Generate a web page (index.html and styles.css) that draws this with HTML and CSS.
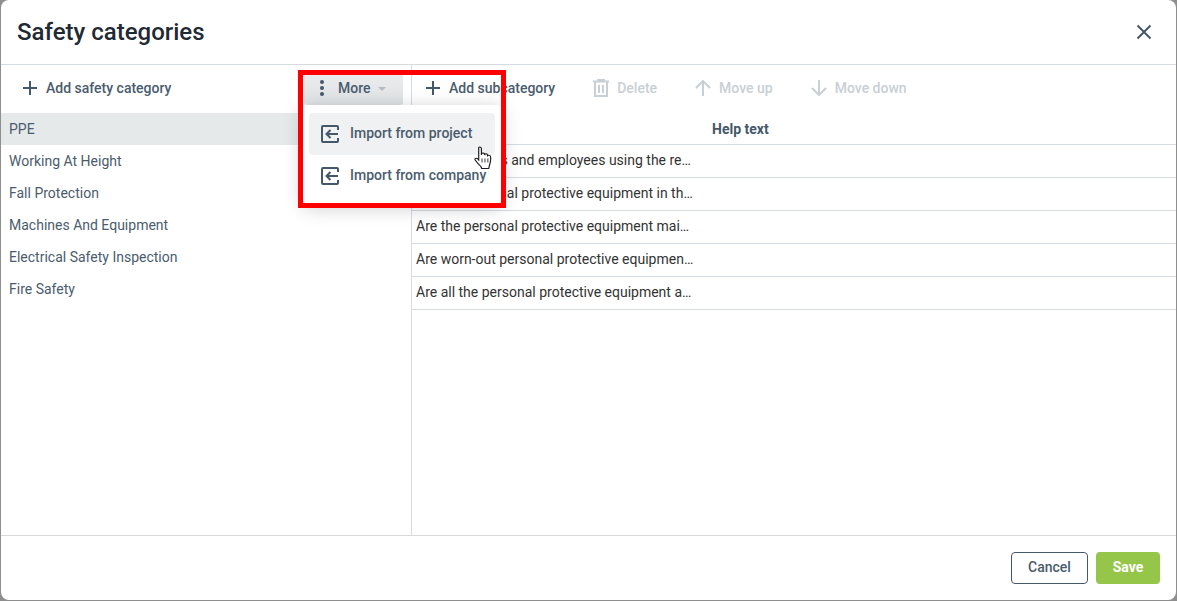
FILE: index.html
```html
<!DOCTYPE html>
<html lang="en">
<head>
<meta charset="utf-8">
<title>Safety categories</title>
<link rel="stylesheet" href="styles.css">
</head>
<body>
<div class="dialog">
  <header class="head">
    <h1 class="title">Safety categories</h1>
    <button class="close" aria-label="Close">
      <svg width="16" height="16" viewBox="0 0 16 16"><path d="M1.500 1.500l13 13M14.500 1.500l-13 13" fill="none" stroke="#44586a" stroke-width="2"/></svg>
    </button>
  </header>
  <main class="body">
    <section class="left">
      <div class="toolbar left-bar">
        <button class="tool">
          <svg class="ico" width="16" height="16" viewBox="0 0 16 16"><path d="M8 1v14M1 8h14" fill="none" stroke="#44586a" stroke-width="2"/></svg>
          Add safety category
        </button>
        <button class="more">
          <svg width="4" height="16" viewBox="0 0 4 16"><circle cx="2" cy="2" r="2" fill="#44586a"/><circle cx="2" cy="8" r="2" fill="#44586a"/><circle cx="2" cy="14" r="2" fill="#44586a"/></svg>
          <span class="more-label">More</span>
          <span class="caret"></span>
        </button>
      </div>
      <ul class="cats">
        <li class="cat selected">PPE</li>
        <li class="cat">Working At Height</li>
        <li class="cat">Fall Protection</li>
        <li class="cat">Machines And Equipment</li>
        <li class="cat">Electrical Safety Inspection</li>
        <li class="cat">Fire Safety</li>
      </ul>
    </section>
    <section class="right">
      <div class="toolbar right-bar">
        <button class="tool">
          <svg class="ico" width="16" height="16" viewBox="0 0 16 16"><path d="M8 1v14M1 8h14" fill="none" stroke="#44586a" stroke-width="2"/></svg>
          Add subcategory
        </button>
        <button class="tool off t-delete">
          <svg class="ico" width="16" height="18" viewBox="0 0 16 18"><path d="M0 2.500h16M5 2.500V1h6v1.500M2 2.500V17h12V2.500M6 6v8M10 6v8" fill="none" stroke="#c8cfd5" stroke-width="2"/></svg>
          Delete
        </button>
        <button class="tool off t-up">
          <svg class="ico" width="16" height="16" viewBox="0 0 16 16"><path d="M8 16V1.500M1 8l7-7 7 7" fill="none" stroke="#c8cfd5" stroke-width="2"/></svg>
          Move up
        </button>
        <button class="tool off t-down">
          <svg class="ico" width="16" height="16" viewBox="0 0 16 16"><path d="M8 0v14.500M1 8l7 7 7-7" fill="none" stroke="#c8cfd5" stroke-width="2"/></svg>
          Move down
        </button>
      </div>
      <div class="table">
        <div class="row row-head"><div class="cell"></div><div class="cell th">Help text</div></div>
        <div class="row"><div class="cell">Are instructors and employees using the required personal protective equipment?</div><div class="cell"></div></div>
        <div class="row"><div class="cell">Are the personal protective equipment in the work area suitable?</div><div class="cell"></div></div>
        <div class="row"><div class="cell">Are the personal protective equipment maintained in good condition?</div><div class="cell"></div></div>
        <div class="row"><div class="cell">Are worn-out personal protective equipment replaced on time?</div><div class="cell"></div></div>
        <div class="row"><div class="cell">Are all the personal protective equipment available on site?</div><div class="cell"></div></div>
      </div>
    </section>
  </main>
  <footer class="foot">
    <button class="btn cancel">Cancel</button>
    <button class="btn save">Save</button>
  </footer>
</div>

<div class="menu">
  <div class="menu-item hover">
    <svg width="18" height="18" viewBox="0 0 18 18"><path d="M17 5V2a1 1 0 0 0-1-1H2a1 1 0 0 0-1 1v14a1 1 0 0 0 1 1h14a1 1 0 0 0 1-1v-3M17 9H5.500M9.500 5l-4 4 4 4" fill="none" stroke="#44586a" stroke-width="2"/></svg>
    <span class="menu-label">Import from project</span>
  </div>
  <div class="menu-item">
    <svg width="18" height="18" viewBox="0 0 18 18"><path d="M17 5V2a1 1 0 0 0-1-1H2a1 1 0 0 0-1 1v14a1 1 0 0 0 1 1h14a1 1 0 0 0 1-1v-3M17 9H5.500M9.500 5l-4 4 4 4" fill="none" stroke="#44586a" stroke-width="2"/></svg>
    <span class="menu-label">Import from company</span>
  </div>
</div>
<div class="highlight"></div>
<svg class="cursor" width="20" height="25" viewBox="0 0 17 25" preserveAspectRatio="none"><path d="M4 1.500c1-.8 2.200-.3 2.300 1V9l.2-1.200c.5-1 2-1 2.400.2l.1 1 .2-.6c.6-.9 2-.7 2.300.4v1l.3-.3c.8-.6 2-.1 2.200 1 .4 2.500.2 5.500-.8 8.500l-.7 3.500H6.500l-.6-2C4 18.500 2.500 16.500 1 14c-.6-1.200.6-2.400 1.800-1.500L4 14V2.500z" fill="#fff" stroke="#1d1d1d" stroke-width="1"/><path d="M6.800 12.500v4M9.300 12.500v4M11.800 12.500v4" fill="none" stroke="#1d1d1d" stroke-width=".8"/></svg>
</body>
</html>
```

FILE: styles.css
```css
* { box-sizing: border-box; }
html, body { margin: 0; height: 100%; }
body {
  background: #8e8e8e;
  font-family: Roboto, "Liberation Sans", sans-serif;
  font-size: 14px;
  color: #4a5c6d;
  padding: 0 1px 1px;
  overflow: hidden;
}
button { font: inherit; color: inherit; background: none; border: 0; padding: 0; }

.dialog {
  height: 600px;
  background: #fff;
  border-radius: 8px;
  display: flex;
  flex-direction: column;
}
.head {
  height: 65px;
  flex: none;
  display: flex;
  align-items: center;
  justify-content: space-between;
  padding: 0 24px 0 16px;
  border-bottom: 1px solid #d5dbe0;
}
.title { margin: 0; font-size: 24px; font-weight: 500; color: #1f2a35; }
.close { display: flex; width: 16px; height: 16px; }

.body { flex: 1; display: flex; min-height: 0; }
.left { width: 411px; flex: none; border-right: 1px solid #d5dbe0; }
.right { flex: 1; min-width: 0; }

.toolbar { display: flex; align-items: center; height: 48px; padding-bottom: 2px; font-weight: 500; }
.left-bar { padding-left: 21px; justify-content: space-between; padding-right: 8px; }
.right-bar { padding-left: 13px; }
.tool { display: flex; align-items: center; gap: 8px; font-weight: 500; white-space: nowrap; }
.tool .ico { flex: none; }
.off { color: #c8cfd5; }
.t-delete { margin-left: 38px; }
.t-up { margin-left: 38px; }
.t-down { margin-left: 38px; }

.more {
  width: 99px;
  height: 30px;
  align-self: flex-end;
  margin-bottom: 6px;
  display: flex;
  align-items: center;
  padding: 0 0 4px 16px;
  font-weight: 500;
  background: linear-gradient(#e9ebed, #e0e3e5);
  border-radius: 0 0 3px 3px;
}
.more-label { margin-left: 14px; }
.caret {
  margin-left: 7px;
  margin-top: 2px;
  border: 4px solid transparent;
  border-top: 4px solid #b5bdc4;
  border-bottom: 0;
}

.cats { list-style: none; margin: 0; padding: 0; }
.cat { height: 32px; line-height: 32px; padding-left: 8px; }
.selected { background: #e6e9ea; }

.row {
  display: grid;
  grid-template-columns: 292px 1fr;
  height: 33px;
  border-bottom: 1px solid #d5dbe0;
  color: #333;
}
.row-head { height: 32px; color: #44586a; }
.cell {
  padding: 0 8px 0 4px;
  line-height: 30px;
  overflow: hidden;
  white-space: nowrap;
  text-overflow: ellipsis;
}
.th { font-weight: 700; padding-left: 8px; line-height: 33px; }

.foot {
  height: 65px;
  flex: none;
  border-top: 1px solid #d9d9d9;
  display: flex;
  align-items: center;
  justify-content: flex-end;
  gap: 8px;
  padding: 0 16px 0 0;
}
.btn { height: 32px; border-radius: 4px; font-weight: 500; padding-bottom: 2px; }
.cancel { width: 77px; border: 1px solid #44586a; background: #fff; }
.save { width: 64px; background: #95c64a; color: #fff; font-weight: 700; }

.menu {
  position: absolute;
  left: 303px;
  top: 105px;
  width: 198px;
  height: 98px;
  padding: 8px 6px;
  background: #fff;
  border-radius: 4px;
  box-shadow: 0 4px 20px rgba(0, 0, 0, .22);
  font-weight: 500;
}
.menu-item {
  height: 42px;
  display: flex;
  align-items: center;
  gap: 11px;
  padding-left: 12px;
  border-radius: 4px;
  white-space: nowrap;
}
.menu-label { padding-bottom: 2px; }
.hover { background: #f0f1f3; }
.highlight {
  position: absolute;
  left: 298px;
  top: 70px;
  width: 208px;
  height: 138px;
  border: 5px solid #fe0000;
}
.cursor { position: absolute; left: 474px; top: 146px; }
```
